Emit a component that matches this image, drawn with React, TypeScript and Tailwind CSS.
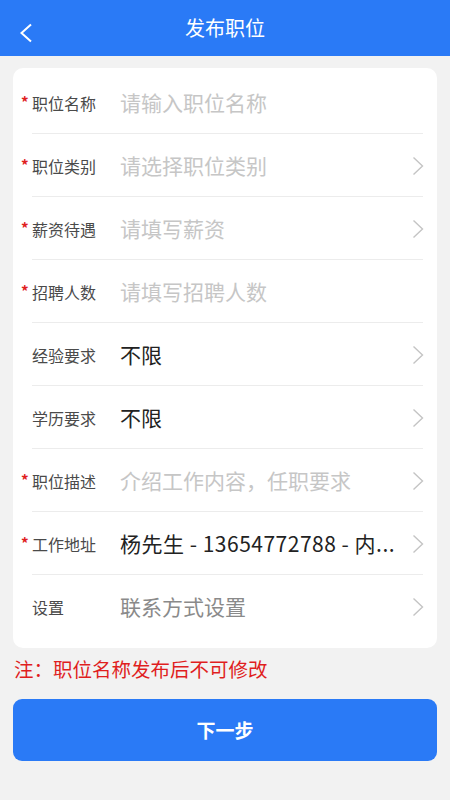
import React from "react";

type Row = {
  label: string;
  required?: boolean;
  value: string;
  filled?: boolean;
  arrow?: boolean;
};

const ROWS: Row[] = [
  { label: "职位名称", required: true, value: "请输入职位名称" },
  { label: "职位类别", required: true, value: "请选择职位类别", arrow: true },
  { label: "薪资待遇", required: true, value: "请填写薪资", arrow: true },
  { label: "招聘人数", required: true, value: "请填写招聘人数" },
  { label: "经验要求", value: "不限", filled: true, arrow: true },
  { label: "学历要求", value: "不限", filled: true, arrow: true },
  { label: "职位描述", required: true, value: "介绍工作内容，任职要求", arrow: true },
  { label: "工作地址", required: true, value: "杨先生 - 13654772788 - 内...", filled: true, arrow: true },
  { label: "设置", value: "联系方式设置", arrow: true },
];

const FONT = { fontFamily: '"Noto Sans CJK SC", "Noto Sans", sans-serif' };

const Chevron = () => (
  <svg width="12" height="20" viewBox="0 0 12 20" fill="none" className="shrink-0">
    <path d="M1.5 1.5 L10.5 10 L1.5 18.5" stroke="#c4c4c4" strokeWidth="1.4" />
  </svg>
);

export default function App() {
  return (
    <div className="min-h-[800px] w-[450px] bg-[#f2f2f2]" style={FONT}>
      {/* header */}
      <div className="relative flex h-[56px] items-center justify-center bg-[#2a7af6]">
        <svg width="14" height="20" viewBox="0 0 14 20" fill="none" className="absolute left-[19px] top-[23px]">
          <path d="M12 1.5 L2.5 10 L12 18.5" stroke="#fff" strokeWidth="2" />
        </svg>
        <span className="text-[20px] text-white">发布职位</span>
      </div>

      {/* form card */}
      <div className="mx-[13px] mt-[12px] rounded-[10px] bg-white pb-[10px] pt-[3px]">
        {ROWS.map((r, i) => (
          <div key={r.label} className="relative flex h-[63px] items-center pl-[19px] pr-[13px]">
            {r.required && (
              <span className="absolute left-[8px] top-[23px] text-[15px] font-bold leading-none text-[#e0201e]">*</span>
            )}
            <span className="w-[88px] shrink-0 text-[16px] text-[#4a4a4a]">{r.label}</span>
            <span
              className={`min-w-0 flex-1 whitespace-nowrap text-[21px] ${
                i === 7 ? "tracking-[0.5px]" : ""
              } ${r.filled ? "text-[#222]" : i === 8 ? "text-[#8a8a8a]" : "text-[#c6c6c6]"}`}
            >
              {r.value}
            </span>
            {r.arrow && (
              <span className="ml-[6px] flex items-center">
                <Chevron />
              </span>
            )}
            {i < ROWS.length - 1 && (
              <div className="absolute bottom-0 left-[19px] right-[14px] h-px bg-[#ececec]" />
            )}
          </div>
        ))}
      </div>

      <p className="px-[14px] pt-[6px] text-[19.5px] text-[#e01e1e]">注：职位名称发布后不可修改</p>

      <div className="px-[13px] pt-[16px]">
        <button className="flex h-[62px] w-full items-center justify-center rounded-[9px] bg-[#2a7af6] text-[19px] font-bold text-white">
          下一步
        </button>
      </div>
    </div>
  );
}
